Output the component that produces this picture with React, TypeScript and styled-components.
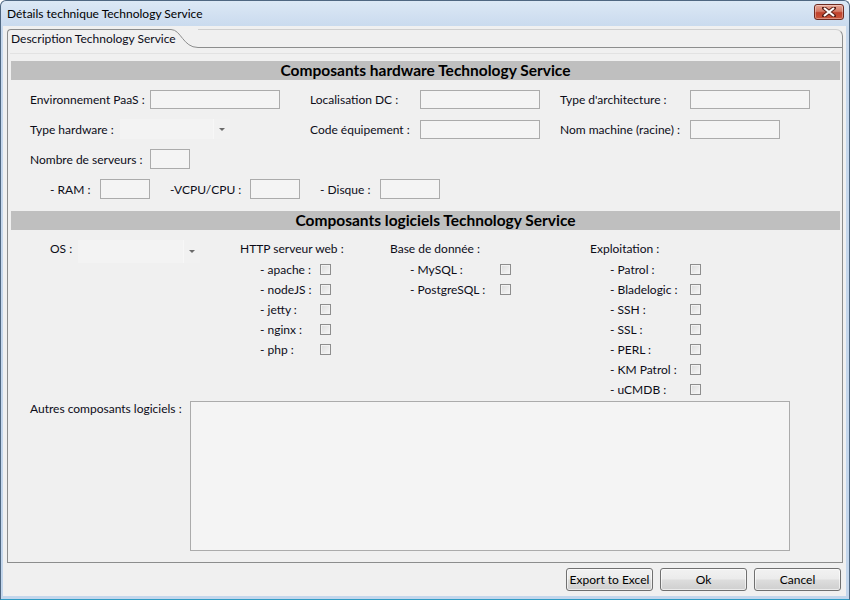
import React from 'react';
import styled, { createGlobalStyle } from 'styled-components';

const GlobalStyle = createGlobalStyle`
  html, body { margin: 0; padding: 0; }
  body {
    font-family: Lato, "Liberation Sans", sans-serif;
    font-size: 12px;
    color: #0c0c18;
  }
`;

const Window = styled.div`
  width: 850px;
  height: 600px;
  box-sizing: border-box;
  display: flex;
  flex-direction: column;
  background: linear-gradient(#dce8f5, #c6d8ed 30px, #c3d6ec);
  border: 1px solid #4f6781;
  border-bottom-color: #2f9cc4;
  border-radius: 6px 6px 0 0;
  overflow: hidden;
`;

const TitleBar = styled.div`
  height: 25px;
  flex: none;
  display: flex;
  align-items: center;
  justify-content: space-between;
  padding: 0 5px 0 6px;
`;

const Title = styled.span`
  font-size: 12px;
  color: #000;
`;

const CloseButton = styled.div`
  width: 30px;
  height: 16px;
  margin-top: -4px;
  box-sizing: border-box;
  border: 1px solid #6e2a20;
  border-radius: 3px;
  background: linear-gradient(#e7a595, #d47a66 45%, #c0412c 55%, #c9563c);
  display: flex;
  align-items: center;
  justify-content: center;
  box-shadow: inset 0 0 0 1px rgba(255, 255, 255, 0.35);
`;

const Client = styled.div`
  flex: 1;
  display: flex;
  flex-direction: column;
  margin: 0 3px 3px 2px;
  background: #f0f0f0;
`;

const Folder = styled.div`
  flex: 1;
  display: flex;
  flex-direction: column;
  margin: 3px 3px 0 4px;
`;

const FolderHeader = styled.div`
  height: 19px;
  display: flex;
  flex: none;
`;

const Tab = styled.div`
  width: 164px;
  box-sizing: border-box;
  border-top: 1px solid #8c8d8d;
  border-left: 1px solid #8c8d8d;
  border-top-left-radius: 4px;
  padding-left: 3px;
  line-height: 17px;
  white-space: nowrap;
  overflow: visible;
  position: relative;
  z-index: 1;
`;

const TabCurve = styled.svg`
  width: 27px;
  height: 19px;
  flex: none;
  display: block;
`;

const HeaderRest = styled.div`
  flex: 1;
  box-sizing: border-box;
  border-top: 1px solid #cfcfcf;
  border-right: 1px solid #8c8d8d;
  border-bottom: 1px solid #8c8d8d;
  border-top-right-radius: 7px;
`;

const FolderBody = styled.div`
  flex: 1;
  display: flex;
  flex-direction: column;
  border: 1px solid #8c8d8d;
  border-top: none;
`;

const FaintLine = styled.div`
  height: 1px;
  margin: 5px 2px 7px 2px;
  background: #e2e2e2;
`;

const SectionHeader = styled.div<{ $top?: number; $shift?: number }>`
  height: 19px;
  margin: ${(p) => p.$top ?? 0}px 2px 0 3px;
  padding-left: ${(p) => p.$shift ?? 0}px;
  background: #bfbfbf;
  font-weight: bold;
  font-size: 15.5px;
  line-height: 19px;
  text-align: center;
  color: #000;
`;

const HwBlock = styled.div`
  padding-top: 4px;
  display: flex;
  flex-direction: column;
`;

const Row = styled.div<{ $indent: number }>`
  height: 30px;
  display: flex;
  align-items: center;
  padding-left: ${(p) => p.$indent}px;
`;

const Cell = styled.div<{ $w?: number }>`
  display: flex;
  align-items: center;
  width: ${(p) => (p.$w ? `${p.$w}px` : 'auto')};
  flex: none;
`;

const Label = styled.span<{ $w: number }>`
  width: ${(p) => p.$w}px;
  flex: none;
  white-space: nowrap;
`;

const Input = styled.div<{ $w: number; $h?: number }>`
  width: ${(p) => p.$w}px;
  height: ${(p) => p.$h ?? 19}px;
  box-sizing: border-box;
  border: 1px solid #ababab;
  background: #f4f4f4;
  flex: none;
`;

const Combo = styled.div<{ $h: number; $mt?: number }>`
  display: flex;
  height: ${(p) => p.$h}px;
  margin-top: ${(p) => p.$mt ?? 0}px;
  flex: none;
`;

const ComboField = styled.div<{ $w: number }>`
  width: ${(p) => p.$w}px;
  background: #f3f3f3;
`;

const ComboArrow = styled.div<{ $w: number }>`
  width: ${(p) => p.$w}px;
  background: #f1f1f1;
  border-left: 1px solid #f7f7f7;
  display: flex;
  align-items: center;
  justify-content: center;
  &::after {
    content: '';
    border-left: 3px solid transparent;
    border-right: 3px solid transparent;
    border-top: 3px solid #6a6a6a;
  }
`;

const SwBlock = styled.div`
  display: flex;
  padding: 9px 0 0 42px;
`;

const Column = styled.div<{ $w?: number }>`
  width: ${(p) => (p.$w ? `${p.$w}px` : 'auto')};
  flex: none;
  display: flex;
  flex-direction: column;
`;

const ColHeading = styled.div`
  height: 20px;
  line-height: 20px;
  display: flex;
  align-items: flex-start;
  white-space: nowrap;
`;

const Item = styled.div`
  height: 20px;
  display: flex;
  align-items: center;
  padding-left: 20px;
`;

const Check = styled.span`
  width: 11px;
  height: 11px;
  box-sizing: border-box;
  border: 1px solid #8e8e8e;
  background: linear-gradient(135deg, #dcdcdc, #f7f7f7);
  box-shadow: inset 0 0 0 1px #f2f2f2;
  flex: none;
`;

const OtherRow = styled.div`
  display: flex;
  align-items: flex-start;
  margin-top: 2px;
  padding-left: 22px;
`;

const OtherLabel = styled.span`
  width: 160px;
  line-height: 16px;
  flex: none;
`;

const TextArea = styled.div`
  width: 600px;
  height: 150px;
  box-sizing: border-box;
  border: 1px solid #ababab;
  background: #f4f4f4;
`;

const ButtonBar = styled.div`
  flex: none;
  display: flex;
  justify-content: flex-end;
  gap: 7px;
  padding: 5px 5px 5px 0;
`;

const Button = styled.div`
  width: 87px;
  height: 23px;
  box-sizing: border-box;
  border: 1px solid #707070;
  border-radius: 3px;
  background: linear-gradient(#f2f2f2, #ebebeb 48%, #dddddd 52%, #cfcfcf);
  box-shadow: inset 0 0 0 1px rgba(255, 255, 255, 0.6);
  display: flex;
  align-items: center;
  justify-content: center;
  color: #000;
`;

const http = ['- apache :', '- nodeJS :', '- jetty :', '- nginx :', '- php :'];
const db = ['- MySQL :', '- PostgreSQL :'];
const exploit = ['- Patrol :', '- Bladelogic :', '- SSH :', '- SSL :', '- PERL :', '- KM Patrol :', '- uCMDB :'];

const CheckColumn: React.FC<{ title: string; items: string[]; labelW: number; w?: number }> = ({
  title,
  items,
  labelW,
  w,
}) => (
  <Column $w={w}>
    <ColHeading>{title}</ColHeading>
    {items.map((it) => (
      <Item key={it}>
        <Label $w={labelW}>{it}</Label>
        <Check />
      </Item>
    ))}
  </Column>
);

export default function App() {
  return (
    <>
      <GlobalStyle />
      <Window>
        <TitleBar>
          <Title>Détails technique Technology Service</Title>
          <CloseButton>
            <svg width="14" height="10" viewBox="0 0 14 10">
              <path
                d="M2 1 L12 9 M12 1 L2 9"
                stroke="#5a2018"
                strokeWidth="4"
                strokeLinecap="square"
              />
              <path d="M2 1 L12 9 M12 1 L2 9" stroke="#ffffff" strokeWidth="2.2" />
            </svg>
          </CloseButton>
        </TitleBar>
        <Client>
          <Folder>
            <FolderHeader>
              <Tab>Description Technology Service</Tab>
              <TabCurve viewBox="0 0 27 19">
                <path d="M0 0.5 C 10 0.5, 12 18.5, 27 18.5" fill="none" stroke="#8c8d8d" strokeWidth="1" />
              </TabCurve>
              <HeaderRest />
            </FolderHeader>
            <FolderBody>
              <FaintLine />
              <SectionHeader>Composants hardware Technology Service</SectionHeader>
              <HwBlock>
                <Row $indent={22}>
                  <Cell $w={280}>
                    <Label $w={120}>Environnement PaaS :</Label>
                    <Input $w={130} />
                  </Cell>
                  <Cell $w={250}>
                    <Label $w={110}>Localisation DC :</Label>
                    <Input $w={120} />
                  </Cell>
                  <Cell>
                    <Label $w={130}>Type d'architecture :</Label>
                    <Input $w={120} />
                  </Cell>
                </Row>
                <Row $indent={22}>
                  <Cell $w={280}>
                    <Label $w={90}>Type hardware :</Label>
                    <Combo $h={20}>
                      <ComboField $w={93} />
                      <ComboArrow $w={16} />
                    </Combo>
                  </Cell>
                  <Cell $w={250}>
                    <Label $w={110}>Code équipement :</Label>
                    <Input $w={120} />
                  </Cell>
                  <Cell>
                    <Label $w={130}>Nom machine (racine) :</Label>
                    <Input $w={90} />
                  </Cell>
                </Row>
                <Row $indent={22}>
                  <Cell>
                    <Label $w={120}>Nombre de serveurs :</Label>
                    <Input $w={40} $h={20} />
                  </Cell>
                </Row>
                <Row $indent={42}>
                  <Cell $w={120}>
                    <Label $w={50}>- RAM :</Label>
                    <Input $w={50} $h={20} />
                  </Cell>
                  <Cell $w={150}>
                    <Label $w={80}>-VCPU/CPU :</Label>
                    <Input $w={50} $h={20} />
                  </Cell>
                  <Cell>
                    <Label $w={60}>- Disque :</Label>
                    <Input $w={60} $h={20} />
                  </Cell>
                </Row>
              </HwBlock>
              <SectionHeader $top={7} $shift={20}>
                Composants logiciels Technology Service
              </SectionHeader>
              <SwBlock>
                <Column $w={190}>
                  <ColHeading>
                    <Label $w={28}>OS :</Label>
                    <Combo $h={23} $mt={1}>
                      <ComboField $w={105} />
                      <ComboArrow $w={16} />
                    </Combo>
                  </ColHeading>
                </Column>
                <CheckColumn title="HTTP serveur web :" items={http} labelW={60} w={150} />
                <CheckColumn title="Base de donnée :" items={db} labelW={90} w={200} />
                <CheckColumn title="Exploitation :" items={exploit} labelW={80} />
              </SwBlock>
              <OtherRow>
                <OtherLabel>Autres composants logiciels :</OtherLabel>
                <TextArea />
              </OtherRow>
            </FolderBody>
          </Folder>
          <ButtonBar>
            <Button>Export to Excel</Button>
            <Button>Ok</Button>
            <Button>Cancel</Button>
          </ButtonBar>
        </Client>
      </Window>
    </>
  );
}
